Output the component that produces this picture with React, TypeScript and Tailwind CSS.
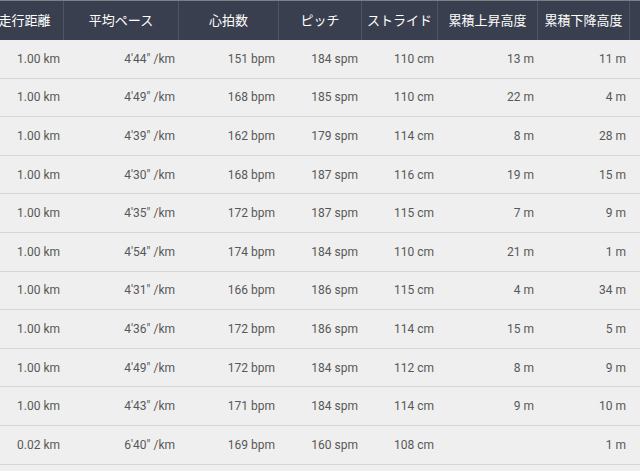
import React from "react";

const widths = [78, 115, 100, 83, 76, 100, 92, 60];
const headers = ["走行距離", "平均ペース", "心拍数", "ピッチ", "ストライド", "累積上昇高度", "累積下降高度", ""];
const rows: string[][] = [
  ["1.00 km", "4'44\" /km", "151 bpm", "184 spm", "110 cm", "13 m", "11 m", ""],
  ["1.00 km", "4'49\" /km", "168 bpm", "185 spm", "110 cm", "22 m", "4 m", ""],
  ["1.00 km", "4'39\" /km", "162 bpm", "179 spm", "114 cm", "8 m", "28 m", ""],
  ["1.00 km", "4'30\" /km", "168 bpm", "187 spm", "116 cm", "19 m", "15 m", ""],
  ["1.00 km", "4'35\" /km", "172 bpm", "187 spm", "115 cm", "7 m", "9 m", ""],
  ["1.00 km", "4'54\" /km", "174 bpm", "184 spm", "110 cm", "21 m", "1 m", ""],
  ["1.00 km", "4'31\" /km", "166 bpm", "186 spm", "115 cm", "4 m", "34 m", ""],
  ["1.00 km", "4'36\" /km", "172 bpm", "186 spm", "114 cm", "15 m", "5 m", ""],
  ["1.00 km", "4'49\" /km", "172 bpm", "184 spm", "112 cm", "8 m", "9 m", ""],
  ["1.00 km", "4'43\" /km", "171 bpm", "184 spm", "114 cm", "9 m", "10 m", ""],
  ["0.02 km", "6'40\" /km", "169 bpm", "160 spm", "108 cm", "", "1 m", ""],
];

export default function App() {
  return (
    <div
      className="w-[640px] h-[471px] overflow-hidden bg-[#efefef]"
      style={{ fontFamily: "Roboto, 'Noto Sans CJK JP', sans-serif" }}
    >
      <div className="ml-[-14px] w-[704px]">
        <div className="flex h-[40px] bg-[#393f4e] border-t border-[#7a7f89]">
          {headers.map((h, i) => (
            <div
              key={i}
              className="flex items-center justify-center border-r border-[#4e5464] text-white text-[13px] shrink-0"
              style={{ width: widths[i] }}
            >
              {h}
            </div>
          ))}
        </div>
        {rows.map((r, ri) => (
          <div key={ri} className="flex h-[38.6px] border-b border-[#d6d6d6]">
            {r.map((c, ci) => (
              <div
                key={ci}
                className="flex items-center justify-end pr-[4px] text-[12px] text-[#585858] shrink-0"
                style={{ width: widths[ci] }}
              >
                {c}
              </div>
            ))}
          </div>
        ))}
      </div>
    </div>
  );
}
